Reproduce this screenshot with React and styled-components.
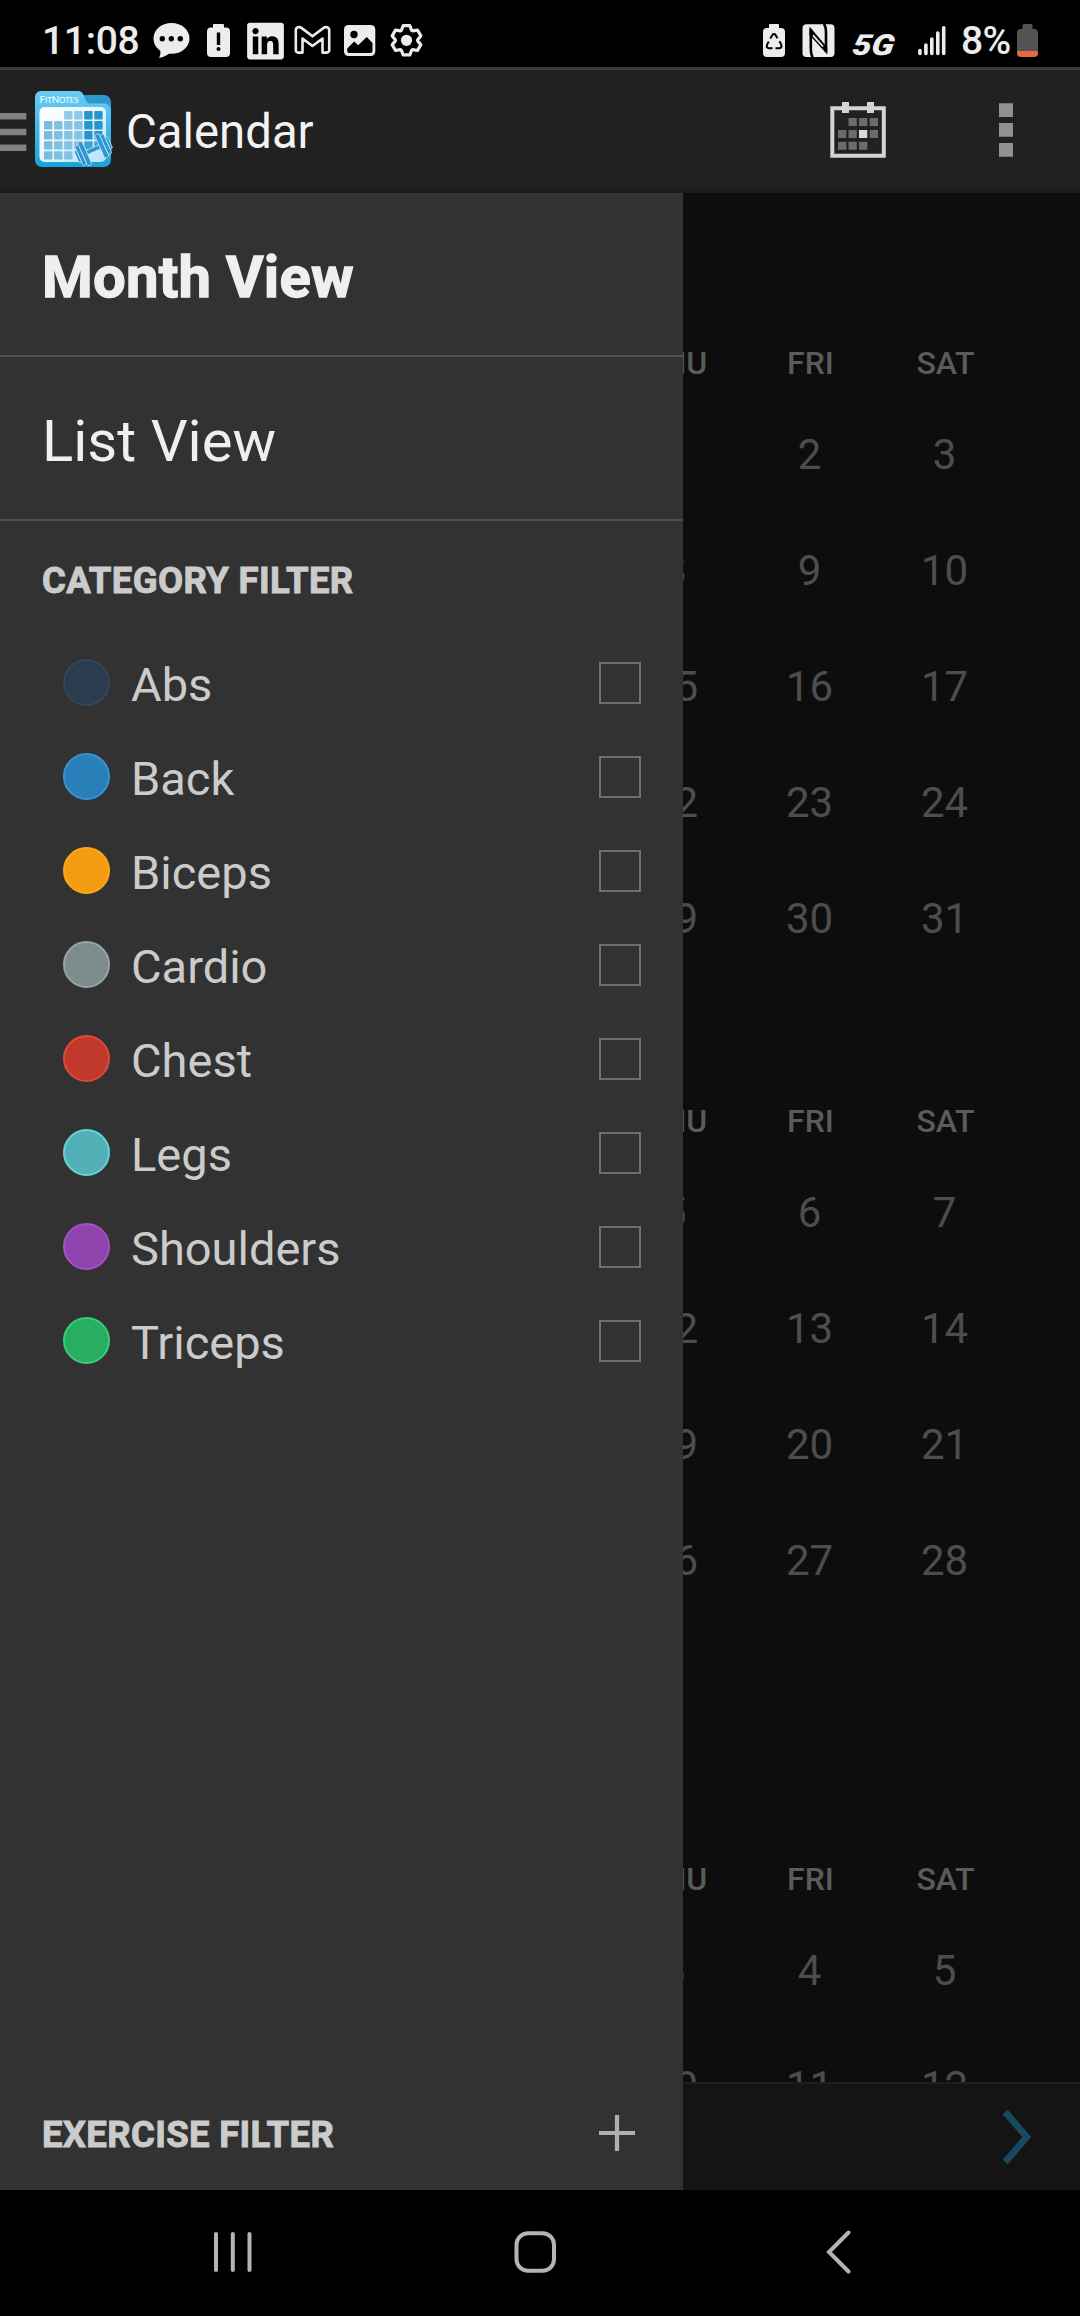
import React from "react";
import styled, { createGlobalStyle } from "styled-components";
import { FaLinkedin } from "react-icons/fa";

const GlobalStyle = createGlobalStyle`
  * { box-sizing: border-box; }
  html, body { margin: 0; padding: 0; background: #000; }
  body { font-family: Roboto, "Noto Sans", sans-serif; overflow: hidden; }
`;

const Screen = styled.div`
  display: flex;
  flex-direction: column;
  width: 1080px;
  height: 2316px;
  background: #000;
  overflow: hidden;
`;

const StatusBar = styled.div`
  display: flex;
  align-items: center;
  justify-content: space-between;
  height: 67px;
  padding: 0 42px 0 42px;
  color: #ececec;
`;

const StatusGroup = styled.div`
  display: flex;
  align-items: center;
  height: 67px;
`;

const StatusText = styled.span`
  font-size: 39px;
  font-weight: 500;
  line-height: 46px;
  padding-top: 14px;
  width: ${(p) => p.$width}px;
  letter-spacing: ${(p) => p.$tracking || 0}px;
  white-space: nowrap;
`;

const NetworkText = styled.span`
  width: 43px;
  margin-left: 15px;
  padding-top: 23px;
  font-size: 29px;
  font-weight: 900;
  font-style: italic;
  line-height: 34px;
  white-space: nowrap;
  transform: scaleX(1.17) skewX(-8deg);
  transform-origin: 0 100%;
`;

const Glyph = styled.svg`
  display: block;
  flex: none;
  margin-left: ${(p) => p.$gap || 0}px;
`;

const LinkedinIcon = styled(FaLinkedin)`
  flex: none;
  width: 37px;
  height: 42px;
  margin: 14px 0 0 17px;
`;

const ActionBar = styled.header`
  display: flex;
  align-items: center;
  height: 126px;
  background: #212121;
  border-top: 3px solid #393939;
  border-bottom: 5px solid #1b1b1b;
`;

const Title = styled.h1`
  flex: 1;
  margin: 0;
  padding: 5px 0 0 12px;
  font-size: 47.3px;
  font-weight: 400;
  line-height: 56px;
  color: #f3f3f3;
`;

const Body = styled.div`
  display: flex;
  height: 1997px;
`;

const Drawer = styled.nav`
  display: flex;
  flex-direction: column;
  width: 683px;
  background: #323232;
`;

const ViewItem = styled.div`
  height: 164px;
  padding: 6px 0 0 42px;
  border-bottom: 2px solid #505050;
  font-size: 58px;
  font-weight: ${(p) => (p.$active ? 700 : 400)};
  letter-spacing: ${(p) => (p.$active ? 0.2 : 0)}px;
  -webkit-text-stroke: ${(p) => (p.$active ? "1.3px #efefef" : "0")};
  line-height: 156px;
  color: #efefef;
`;

const SectionTitle = styled.div`
  display: flex;
  align-items: center;
  justify-content: space-between;
  height: ${(p) => p.$height}px;
  padding: 4px 42px 0 42px;
  font-size: 36.5px;
  font-weight: 700;
  letter-spacing: 0.33px;
  -webkit-text-stroke: 0.9px #cbcbcb;
  color: #cbcbcb;
`;

const PlusButton = styled.span`
  margin-bottom: 3px;
`;

const Categories = styled.div`
  flex: 1;
`;

const Category = styled.div`
  display: flex;
  align-items: center;
  height: 94px;
  padding: 0 42px 0 63px;
`;

const Dot = styled.span`
  width: 47px;
  height: 47px;
  margin-bottom: 2px;
  border-radius: 50%;
  background: ${(p) => p.$fill};
  border: 2px solid ${(p) => p.$ring};
`;

const CategoryName = styled.span`
  flex: 1;
  padding: 4px 0 0 21px;
  font-size: 47px;
  line-height: 56px;
  color: #cbcbcb;
`;

const Checkbox = styled.span`
  width: 42px;
  height: 42px;
  border: 2px solid #6f6f6f;
`;

const CalendarPane = styled.main`
  display: flex;
  flex-direction: column;
  flex: 1;
  min-width: 0;
  background: #0d0d0d;
`;

const Months = styled.div`
  flex: 1;
  min-height: 0;
  overflow: hidden;
`;

const Month = styled.section`
  height: 758px;
  padding-top: 145px;
`;

const Row = styled.div`
  display: flex;
  justify-content: flex-end;
  align-items: center;
  height: ${(p) => p.$height}px;
  margin-bottom: ${(p) => p.$gap || 0}px;
  padding-right: ${(p) => p.$inset || 68}px;
`;

const Weekday = styled.span`
  flex: none;
  width: 135px;
  text-align: center;
  font-size: 32px;
  font-weight: 500;
  color: #5b5b5b;
`;

const Day = styled.span`
  flex: none;
  width: 135px;
  text-align: center;
  font-size: 42px;
  color: #4d4d4d;
`;

const PagerBar = styled.div`
  display: flex;
  align-items: center;
  justify-content: flex-end;
  height: 108px;
  padding-right: 42px;
  border-top: 2px solid #1e1e1e;
  background: #141414;
`;

const NavBar = styled.footer`
  display: flex;
  align-items: center;
  height: 126px;
`;

const categories = [
  ["Abs", "#2c3c4f", "#33475c"],
  ["Back", "#2980b9", "#3594d6"],
  ["Biceps", "#f39c12", "#fba61f"],
  ["Cardio", "#7f8c8d", "#95a5a6"],
  ["Chest", "#c0392b", "#e0483a"],
  ["Legs", "#53b0b6", "#66d2d8"],
  ["Shoulders", "#8e44ad", "#a352c6"],
  ["Triceps", "#27ae60", "#36cf76"],
];

const months = [
  [[2, 3], [8, 9, 10], [15, 16, 17], [22, 23, 24], [29, 30, 31]],
  [[5, 6, 7], [12, 13, 14], [19, 20, 21], [26, 27, 28]],
  [[3, 4, 5], [10, 11, 12]],
];

const gearPath =
  Array.from({ length: 6 })
    .flatMap((_, i) =>
      [[-27, 11.2], [-13, 15], [13, 15], [27, 11.2]].map(([d, r]) => {
        const a = ((i * 60 - 90 + d) * Math.PI) / 180;
        return `${(16.5 + r * Math.cos(a)).toFixed(2)} ${(40.3 + r * Math.sin(a)).toFixed(2)}`;
      })
    )
    .reduce((d, p, i) => d + (i ? "L" : "M") + p, "") + "Z";

const ChatIcon = () => (
  <Glyph width="37" height="67" $gap={17}>
    <path fill="#ececec" d="M18.500 23C8.300 23 .5 29.800 .5 38.500c0 5 2.600 9.400 6.800 12.200 .5 3-.3 5.300-1.300 7.300 4.200-.7 7.700-2.300 10-4.200 12 .9 20.500-6.600 20.500-15.300C36.500 29.800 28.700 23 18.500 23z" />
    <g fill="#000"><circle cx="9.300" cy="38.800" r="2.700" /><circle cx="18.300" cy="38.800" r="2.700" /><circle cx="27.300" cy="38.800" r="2.700" /></g>
  </Glyph>
);

const BatteryAlertIcon = () => (
  <Glyph width="23" height="67" $gap={17}>
    <path fill="#ececec" d="M7 24h9a1 1 0 0 1 1 1v2.500h2a4 4 0 0 1 4 4V53a4 4 0 0 1-4 4H4a4 4 0 0 1-4-4V31.500a4 4 0 0 1 4-4h2V25a1 1 0 0 1 1-1z" />
    <path stroke="#000" strokeWidth="3.400" d="M11.500 32.500V45" /><circle cx="11.500" cy="49" r="2" />
  </Glyph>
);

const MailIcon = () => (
  <Glyph width="37" height="67" $gap={10}>
    <path fill="none" stroke="#ececec" strokeWidth="2.600" strokeLinejoin="round" d="M1.800 30.300v20a2.300 2.300 0 0 0 2.300 2.300h4.400V38.500l10 7.500 10-7.500v14.100h4.400a2.300 2.300 0 0 0 2.300-2.300v-20c0-3.200-3.600-3.900-5.600-2.400L18.500 36.300 7.400 27.900c-2-1.500-5.600-.8-5.600 2.400z" />
  </Glyph>
);

const PictureIcon = () => (
  <Glyph width="32" height="67" $gap={13}>
    <rect y="25" width="31.300" height="31" rx="4.500" fill="#ececec" />
    <circle cx="10" cy="34.500" r="3.700" />
    <path d="M3.200 51v-2.500l7-7 4 3.700 8.500-8.200 5.800 6V51a2 2 0 0 1-2 2h-21.300a2 2 0 0 1-2-2z" />
  </Glyph>
);

const GearIcon = () => (
  <Glyph width="34" height="67" $gap={14}>
    <path d={gearPath} fill="none" stroke="#ececec" strokeWidth="3.200" strokeLinejoin="round" />
    <circle cx="16.500" cy="40.300" r="5.600" fill="#ececec" />
  </Glyph>
);

const BatterySaverIcon = () => (
  <Glyph width="23" height="67">
    <path fill="#ececec" d="M7 24h8a1 1 0 0 1 1 1v3h2a4 4 0 0 1 4 4v21a4 4 0 0 1-4 4H4a4 4 0 0 1-4-4V32a4 4 0 0 1 4-4h2v-3a1 1 0 0 1 1-1z" />
    <g fill="none" stroke="#000" strokeWidth="2">
      <path d="M7.300 38.500l2-3.300q1.700-2.200 3.400 0l1.800 3" />
      <path d="M16.500 41.300l1.800 3.500q.9 3-2 3.400h-3.800" />
      <path d="M9.500 48.200H6q-3-.4-2-3.400l1.800-3.300" />
    </g>
  </Glyph>
);

const NfcIcon = () => (
  <Glyph width="33" height="67" $gap={16}>
    <rect x=".5" y="24.300" width="32" height="32.700" rx="4" fill="#ececec" />
    <path fill="none" stroke="#000" strokeWidth="2.600" d="M10.500 57.300Q8.800 53.500 8.800 49V29M24 52V31.500Q24 27 22 24" />
    <path d="M7.500 26.500L25.300 47.500V54.500L7.500 35z" />
    <path stroke="#ececec" strokeWidth="1.800" d="M11 35.300L21 46.500" />
  </Glyph>
);

const SignalIcon = () => (
  <Glyph width="28" height="67" $gap={25}>
    <g stroke="#ececec" strokeWidth="3.600" strokeLinecap="round">
      <path d="M1.900 50.500v3M7.900 45v8.500M13.800 39v14.500M19.800 33v20.500M25.700 27.800v25.700" />
    </g>
  </Glyph>
);

const BatteryIcon = () => (
  <Glyph width="21" height="67" $gap={7}>
    <path fill="#545454" d="M7 24h7a1.500 1.500 0 0 1 1.500 1.500V29H17a4 4 0 0 1 4 4v18H0V33a4 4 0 0 1 4-4h1.500v-3.500A1.500 1.500 0 0 1 7 24z" />
    <path fill="#e9683f" d="M0 51h21v2a4 4 0 0 1-4 4H4a4 4 0 0 1-4-4z" />
  </Glyph>
);

const MenuIcon = () => (
  <Glyph width="27" height="118">
    <path fill="#828286" d="M0 43h26.300v6.500H0zM0 58.700h26.300v6.500H0zM0 74.500h26.300V81H0z" />
  </Glyph>
);

const tiles = [
  [null, null, "#8fc9e8", "#8fc9e8", "#2795cc", "#2795cc"],
  ["#78bce0", "#7ec0e2", "#84c3e4", "#84c3e4", "#2795cc", "#2795cc"],
  ["#78bce0", "#7ec0e2", "#84c3e4", "#84c3e4", "#2795cc", "#2795cc"],
  ["#78bce0", "#7ec0e2", "#84c3e4", "#84c3e4", "#3da3d6", "#3da3d6"],
  ["#78bce0", "#7ec0e2", "#84c3e4", null, "#c3e6f6", null],
];

const AppLogo = () => (
  <Glyph width="79" height="79" viewBox="0 0 79 79" $gap={8}>
    <defs>
      <linearGradient id="folder" x1="0" y1="0" x2="0" y2="1">
        <stop offset="0" stopColor="#6ccdf6" /><stop offset="1" stopColor="#16a3da" />
      </linearGradient>
      <linearGradient id="sheet" x1="0" y1="0" x2="1" y2="1">
        <stop offset="0" stopColor="#ffffff" /><stop offset=".35" stopColor="#f2fafe" /><stop offset="1" stopColor="#b4e2f7" />
      </linearGradient>
    </defs>
    <path fill="#2c99cd" d="M40 5h29a7 7 0 0 1 7 7v20H40z" />
    <path fill="url(#folder)" d="M6 1h37q4 0 5.500 4l2 5q1.500 3.500 5 3.500h14a6.500 6.500 0 0 1 6.500 6.500v50a7 7 0 0 1-7 7H7a7 7 0 0 1-7-7V7a6 6 0 0 1 6-6z" />
    <rect x="4.500" y="17" width="66.500" height="55" rx="5" fill="url(#sheet)" />
    <text x="4.500" y="13" fill="#fff" fontFamily="Lato, sans-serif" fontSize="8" textLength="39" lengthAdjust="spacingAndGlyphs">
      <tspan fontSize="10">F</tspan>IT<tspan fontSize="10">N</tspan>OTES
    </text>
    {tiles.map((row, r) =>
      row.map((c, i) => c && <rect key={`${r}-${i}`} x={9 + i * 10.050} y={21 + r * 10.050} width="8.400" height="8.400" rx="1" fill={c} />)
    )}
    <g transform="translate(58.300 59.700) rotate(-24)" fill="#2f97cf" stroke="#c9ecfb" strokeWidth=".7">
      <rect x="-9" y="-2.200" width="18" height="4.400" />
      <rect x="-11.800" y="-12.800" width="4.800" height="25.600" rx="2" />
      <rect x="-15.800" y="-10.800" width="4" height="21.600" rx="1.800" />
      <rect x="-18.300" y="-6.500" width="2.500" height="13" rx="1.200" />
      <rect x="7" y="-12.800" width="4.800" height="25.600" rx="2" />
      <rect x="11.800" y="-10.800" width="4" height="21.600" rx="1.800" />
      <rect x="15.800" y="-6.500" width="2.500" height="13" rx="1.200" />
    </g>
  </Glyph>
);

const TodayIcon = () => (
  <Glyph width="57" height="118">
    <path fill="none" stroke="#d4d4d4" strokeWidth="4" d="M2.300 38.300h51.500v47.500H2.300z" />
    <path fill="#d4d4d4" d="M12 32h7v11h-7zM37 32h7v11h-7z" />
    <path fill="#6b6b6b" d="M18.500 48h8.300v8h-8.300zM29 48h8.300v8H29zM39.700 48H48v8h-8.300zM8 60h8.300v8H8zM18.500 60h8.300v8h-8.300zM39.700 60H48v8h-8.300zM8 71.700h8.300v8H8zM18.500 71.700h8.300v8h-8.300zM29 71.700h8.300v8H29z" />
    <path fill="#dadada" d="M29 60h8.300v8H29z" />
  </Glyph>
);

const OverflowIcon = () => (
  <Glyph width="81" height="118" $gap={112}>
    <path fill="#919191" d="M0 33.300h14V47H0zM0 53h14v13.700H0zM0 73h14v13.700H0z" />
  </Glyph>
);

export default function App() {
  return (
    <Screen>
      <GlobalStyle />
      <StatusBar>
        <StatusGroup>
          <StatusText $width={94} $tracking={-0.3}>11:08</StatusText>
          <ChatIcon />
          <BatteryAlertIcon />
          <LinkedinIcon />
          <MailIcon />
          <PictureIcon />
          <GearIcon />
        </StatusGroup>
        <StatusGroup>
          <BatterySaverIcon />
          <NfcIcon />
          <NetworkText>5G</NetworkText>
          <SignalIcon />
          <Glyph width="15" height="1" />
          <StatusText $width={49} $tracking={-0.7}>8%</StatusText>
          <BatteryIcon />
        </StatusGroup>
      </StatusBar>
      <ActionBar>
        <MenuIcon />
        <AppLogo />
        <Title>Calendar</Title>
        <TodayIcon />
        <OverflowIcon />
      </ActionBar>
      <Body>
        <Drawer>
          <ViewItem $active>Month View</ViewItem>
          <ViewItem>List View</ViewItem>
          <SectionTitle $height={115}>CATEGORY FILTER</SectionTitle>
          <Categories>
            {categories.map(([name, fill, ring]) => (
              <Category key={name}>
                <Dot $fill={fill} $ring={ring} />
                <CategoryName>{name}</CategoryName>
                <Checkbox />
              </Category>
            ))}
          </Categories>
          <SectionTitle $height={116}>
            EXERCISE FILTER
            <PlusButton>
              <Glyph width="48" height="36">
                <path stroke="#b0b0b0" strokeWidth="4.200" d="M6 18h36M24 0v36" />
              </Glyph>
            </PlusButton>
          </SectionTitle>
        </Drawer>
        <CalendarPane>
          <Months>
            {months.map((weeks, m) => (
              <Month key={m}>
                <Row $height={50} $gap={8} $inset={67}>
                  <Weekday>THU</Weekday>
                  <Weekday>FRI</Weekday>
                  <Weekday>SAT</Weekday>
                </Row>
                {weeks.map((days) => (
                  <Row key={days[0]} $height={116}>
                    {days.map((d) => (
                      <Day key={d}>{d}</Day>
                    ))}
                  </Row>
                ))}
              </Month>
            ))}
          </Months>
          <PagerBar>
            <Glyph width="36" height="60">
              <path fill="none" stroke="#17495f" strokeWidth="6.800" d="M3.200 5L24.800 30 3.200 55" />
            </Glyph>
          </PagerBar>
        </CalendarPane>
      </Body>
      <NavBar>
        <Glyph width="40" height="44" $gap={213}>
          <path stroke="#b4b4b4" strokeWidth="4" strokeLinecap="round" d="M3 3v36M19.800 3v36M36.500 3v36" />
        </Glyph>
        <Glyph width="44" height="44" $gap={260}>
          <rect x="3.500" y="2.300" width="37.500" height="37.500" rx="11.500" fill="none" stroke="#b4b4b4" strokeWidth="4" />
        </Glyph>
        <Glyph width="28" height="46" $gap={268}>
          <path fill="none" stroke="#b4b4b4" strokeWidth="4" strokeLinecap="round" d="M23.500 2.500L4 22 23.500 41.500" />
        </Glyph>
      </NavBar>
    </Screen>
  );
}
